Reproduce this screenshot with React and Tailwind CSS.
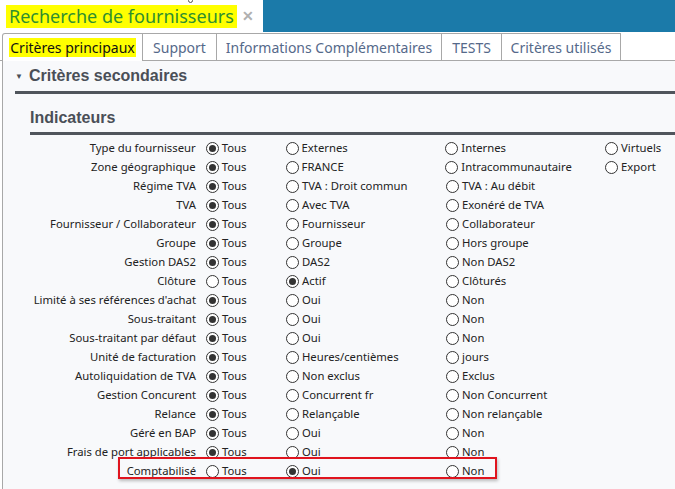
import React from "react";

const rows = [
  ["Type du fournisseur", ["Tous", "Externes", "Internes", "Virtuels"], 0],
  ["Zone géographique", ["Tous", "FRANCE", "Intracommunautaire", "Export"], 0],
  ["Régime TVA", ["Tous", "TVA : Droit commun", "TVA : Au débit"], 0],
  ["TVA", ["Tous", "Avec TVA", "Exonéré de TVA"], 0],
  ["Fournisseur / Collaborateur", ["Tous", "Fournisseur", "Collaborateur"], 0],
  ["Groupe", ["Tous", "Groupe", "Hors groupe"], 0],
  ["Gestion DAS2", ["Tous", "DAS2", "Non DAS2"], 0],
  ["Clôture", ["Tous", "Actif", "Clôturés"], 1],
  ["Limité à ses références d'achat", ["Tous", "Oui", "Non"], 0],
  ["Sous-traitant", ["Tous", "Oui", "Non"], 0],
  ["Sous-traitant par défaut", ["Tous", "Oui", "Non"], 0],
  ["Unité de facturation", ["Tous", "Heures/centièmes", "jours"], 0],
  ["Autoliquidation de TVA", ["Tous", "Non exclus", "Exclus"], 0],
  ["Gestion Concurent", ["Tous", "Concurrent fr", "Non Concurrent"], 0],
  ["Relance", ["Tous", "Relançable", "Non relançable"], 0],
  ["Géré en BAP", ["Tous", "Oui", "Non"], 0],
  ["Frais de port applicables", ["Tous", "Oui", "Non"], 0],
  ["Comptabilisé", ["Tous", "Oui", "Non"], 1],
];

const colW = ["w-[80px]", "w-[160px]", "w-[160px]", "w-[70px]"];

function Radio({ checked }) {
  return (
    <span className="w-[13px] h-[13px] rounded-full border border-[#333] bg-white flex items-center justify-center shrink-0">
      {checked && <span className="w-[7px] h-[7px] rounded-full bg-[#333]" />}
    </span>
  );
}

function Row({ label, opts, sel, boxed }) {
  return (
    <div className="relative flex items-center h-[19px]">
      {boxed && (
        <div className="absolute left-[118px] top-[-5px] w-[379px] h-[22px] border-2 border-[#e0141e] shadow-[1px_2px_3px_rgba(0,0,0,0.25)] pointer-events-none" />
      )}
      <div className="w-[196px] text-right whitespace-nowrap">{label}</div>
      <div className="w-[10px]" />
      {opts.map((o, i) => (
        <div key={i} className={`${colW[i]} flex items-center gap-[3px] whitespace-nowrap`}>
          <Radio checked={i === sel} />
          <span>{o}</span>
        </div>
      ))}
    </div>
  );
}

const tabs = [
  ["Support", "w-[74px]"],
  ["Informations Complémentaires", "w-[225px]"],
  ["TESTS", "w-[60px]"],
  ["Critères utilisés", "w-[119px]"],
];

export default function App() {
  return (
    <div className="w-[675px] h-[489px] overflow-hidden bg-white text-[#222]" style={{ fontFamily: '"Noto Sans", "Open Sans", sans-serif' }}>
      {/* top bar */}
      <div className="flex h-[32px]">
        <div className="w-[263px] bg-white flex items-center pl-[6px] relative">
          <span className="bg-[#ffff00] text-[#2f8f2f] text-[18px] leading-[23px] px-[3px] whitespace-nowrap">Recherche de fournisseurs</span>
          <span className="ml-[5px] text-[#b0b0b0] text-[14px] font-bold leading-none">✕</span>
          <span className="absolute left-[188px] top-[-2px] w-[5px] h-[5px] rounded-full border border-[#555]" />
        </div>
        <div className="flex-1 bg-[#1b7aa9]" />
      </div>
      {/* tabs */}
      <div className="flex h-[28px] mt-[1px] text-[14px]">
        <div className="w-[2px] border-b border-[#a8a8a8]" />
        <div className="w-[141px] flex items-center justify-center border-l border-t border-r border-[#a8a8a8] rounded-tl-[3px] bg-white">
          <span className="bg-[#ffff00] text-[#111] px-[1px] leading-[19px]">Critères principaux</span>
        </div>
        {tabs.map(([t, w]) => (
          <div key={t} className={`${w} flex items-center justify-center border-t border-r border-b border-[#a8a8a8] text-[#55698a] whitespace-nowrap`}>
            {t}
          </div>
        ))}
        <div className="flex-1 border-b border-[#a8a8a8]" />
      </div>
      {/* panel */}
      <div className="ml-[2px] border-l border-[#a8a8a8] bg-[#f8f9fb] h-[430px]">
        <div className="flex items-center h-[30px] pl-[12px] text-[16px] font-bold text-[#4a4f57]" style={{ fontFamily: '"Liberation Sans", Arial, sans-serif' }}>
          <span className="text-[8px] mr-[6px] mt-[2px]">▼</span>
          <span>Critères secondaires</span>
        </div>
        <div className="ml-[12px] h-[3px] bg-[#50555c]" />
        <div className="pl-[27px] pt-[14px]">
          <div className="text-[16px] font-bold text-[#4a4f57] leading-[20px]" style={{ fontFamily: '"Liberation Sans", Arial, sans-serif' }}>Indicateurs</div>
          <div className="h-[3px] bg-[#50555c] mt-[4px]" />
        </div>
        <div className="pt-[4px] text-[11.3px] -ml-[3px]">
          {rows.map(([l, o, s], i) => (
            <Row key={i} label={l} opts={o} sel={s} boxed={i === rows.length - 1} />
          ))}
        </div>
      </div>
    </div>
  );
}
